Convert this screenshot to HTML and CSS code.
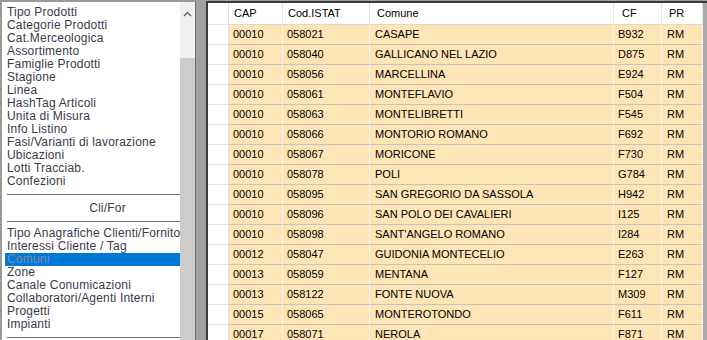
FILE: index.html
```html
<!DOCTYPE html>
<html lang="it">
<head>
    <meta charset="UTF-8">
    <title>Comuni</title>
    <link rel="stylesheet" href="styles.css">
</head>
<body>
    <div class="app">
        <aside class="menu">
            <div class="menu-list">
                <ul class="items">
                    <li>Tipo Prodotti</li>
                    <li>Categorie Prodotti</li>
                    <li>Cat.Merceologica</li>
                    <li>Assortimento</li>
                    <li>Famiglie Prodotti</li>
                    <li>Stagione</li>
                    <li>Linea</li>
                    <li>HashTag Articoli</li>
                    <li>Unita di Misura</li>
                    <li>Info Listino</li>
                    <li>Fasi/Varianti di lavorazione</li>
                    <li>Ubicazioni</li>
                    <li>Lotti Tracciab.</li>
                    <li>Confezioni</li>
                </ul>
                <div class="group-title">Cli/For</div>
                <ul class="items">
                    <li>Tipo Anagrafiche Clienti/Fornitori</li>
                    <li>Interessi Cliente / Tag</li>
                    <li class="selected">Comuni</li>
                    <li>Zone</li>
                    <li>Canale Conumicazioni</li>
                    <li>Collaboratori/Agenti Interni</li>
                    <li>Progetti</li>
                    <li>Impianti</li>
                </ul>
                <div class="group-end"></div>
            </div>
            <div class="vscroll">
                <svg class="arrow" width="9" height="6" viewBox="0 0 9 6">
                    <polyline points="1,5 4.5,1.5 8,5" fill="none" stroke="#606060" stroke-width="1.4"/>
                </svg>
                <div class="thumb"></div>
            </div>
        </aside>

        <section class="grid">
            <table class="data">
                <colgroup>
                    <col class="c-ind">
                    <col class="c-cap">
                    <col class="c-istat">
                    <col class="c-comune">
                    <col class="c-cf">
                    <col class="c-pr">
                </colgroup>
                <thead>
                    <tr>
                        <th class="ind"></th>
                        <th>CAP</th>
                        <th>Cod.ISTAT</th>
                        <th class="h-comune">Comune</th>
                        <th class="h-cf">CF</th>
                        <th class="h-pr">PR</th>
                    </tr>
                </thead>
                <tbody>
                    <tr><td class="ind"></td><td>00010</td><td>058021</td><td class="comune">CASAPE</td><td>B932</td><td class="pr">RM</td></tr>
                    <tr><td class="ind"></td><td>00010</td><td>058040</td><td class="comune">GALLICANO NEL LAZIO</td><td>D875</td><td class="pr">RM</td></tr>
                    <tr><td class="ind"></td><td>00010</td><td>058056</td><td class="comune">MARCELLINA</td><td>E924</td><td class="pr">RM</td></tr>
                    <tr><td class="ind"></td><td>00010</td><td>058061</td><td class="comune">MONTEFLAVIO</td><td>F504</td><td class="pr">RM</td></tr>
                    <tr><td class="ind"></td><td>00010</td><td>058063</td><td class="comune">MONTELIBRETTI</td><td>F545</td><td class="pr">RM</td></tr>
                    <tr><td class="ind"></td><td>00010</td><td>058066</td><td class="comune">MONTORIO ROMANO</td><td>F692</td><td class="pr">RM</td></tr>
                    <tr><td class="ind"></td><td>00010</td><td>058067</td><td class="comune">MORICONE</td><td>F730</td><td class="pr">RM</td></tr>
                    <tr><td class="ind"></td><td>00010</td><td>058078</td><td class="comune">POLI</td><td>G784</td><td class="pr">RM</td></tr>
                    <tr><td class="ind"></td><td>00010</td><td>058095</td><td class="comune">SAN GREGORIO DA SASSOLA</td><td>H942</td><td class="pr">RM</td></tr>
                    <tr><td class="ind"></td><td>00010</td><td>058096</td><td class="comune">SAN POLO DEI CAVALIERI</td><td>I125</td><td class="pr">RM</td></tr>
                    <tr><td class="ind"></td><td>00010</td><td>058098</td><td class="comune">SANT'ANGELO ROMANO</td><td>I284</td><td class="pr">RM</td></tr>
                    <tr><td class="ind"></td><td>00012</td><td>058047</td><td class="comune">GUIDONIA MONTECELIO</td><td>E263</td><td class="pr">RM</td></tr>
                    <tr><td class="ind"></td><td>00013</td><td>058059</td><td class="comune">MENTANA</td><td>F127</td><td class="pr">RM</td></tr>
                    <tr><td class="ind"></td><td>00013</td><td>058122</td><td class="comune">FONTE NUOVA</td><td>M309</td><td class="pr">RM</td></tr>
                    <tr><td class="ind"></td><td>00015</td><td>058065</td><td class="comune">MONTEROTONDO</td><td>F611</td><td class="pr">RM</td></tr>
                    <tr><td class="ind"></td><td>00017</td><td>058071</td><td class="comune">NEROLA</td><td>F871</td><td class="pr">RM</td></tr>
                </tbody>
            </table>
        </section>
    </div>
</body>
</html>
```

FILE: styles.css
```css
html, body {
    margin: 0;
    padding: 0;
    height: 100%;
    overflow: hidden;
}
body {
    background-color: #a0a0a0;
    font-family: 'Liberation Sans', Arial, sans-serif;
}
.app {
    display: flex;
    gap: 10px;
    height: 100%;
}

/* left menu */
.menu {
    display: flex;
    width: 196px;
    flex: none;
    box-sizing: border-box;
    border-top: 2px solid #9a9a9a;
    border-left: 2px solid #9a9a9a;
    border-right: 1px solid #6e6e6e;
    background: #ffffff;
}
.menu-list {
    width: 178px;
    padding: 4px 0 0 3px;
    box-sizing: border-box;
    font-size: 12px;
    letter-spacing: 0.2px;
    color: #3a3a4c;
}
.items {
    list-style: none;
    margin: 0;
    padding: 0;
}
.items li {
    height: 13px;
    line-height: 13px;
    padding-left: 2px;
    white-space: nowrap;
    overflow: hidden;
}
.items li.selected {
    background: #0078d7;
    color: #7d8aa6;
}
.group-title {
    margin: 6px 0 5px 2px;
    border-top: 1px solid #6e6e6e;
    border-bottom: 1px solid #6e6e6e;
    height: 26px;
    line-height: 26px;
    padding-left: 28px;
    text-align: center;
}
.group-end {
    margin: 6px 0 0 2px;
    border-top: 1px solid #6e6e6e;
}
.vscroll {
    position: relative;
    width: 15px;
    background: #f0f0f0;
}
.vscroll .arrow {
    position: absolute;
    left: 3px;
    top: 9px;
}
.vscroll .thumb {
    position: absolute;
    left: 0;
    right: 0;
    top: 56px;
    bottom: 0;
    background: #cdcdcd;
}

/* grid */
.grid {
    flex: 1;
    margin-top: 1px;
    border-top: 2px solid #3a3a3a;
    border-left: 2px solid #3a3a3a;
    background: #ababab;
    overflow: hidden;
}
.data {
    width: 495px;
    table-layout: fixed;
    border-collapse: separate;
    border-spacing: 0;
    font-size: 11px;
    color: #000000;
}
.c-ind { width: 21px; }
.c-cap { width: 54px; }
.c-istat { width: 87px; }
.c-comune { width: 244px; }
.c-cf { width: 48px; }
.c-pr { width: 41px; }
.data th {
    background: #ffffff;
    font-weight: normal;
    text-align: left;
    height: 21px;
    line-height: 21px;
    padding: 0 0 0 5px;
    border-right: 1px solid #e3e3e3;
    border-bottom: 1px solid #d8d8d8;
    white-space: nowrap;
}
.data th.h-comune { padding-left: 7px; }
.data th.h-cf { padding-left: 8px; }
.data th.h-pr { padding-left: 7px; }
.data td {
    background: #ffe4b5;
    line-height: 19px;
    padding: 0 0 0 4px;
    border-right: 1px solid #f4f4f4;
    border-bottom: 1px solid #c4c4c4;
    white-space: nowrap;
    overflow: hidden;
}
.data td.comune,
.data td.pr {
    padding-left: 5px;
}
.data .ind {
    background: #ffffff;
    padding: 0;
    border-right: 1px solid #e0e0e0;
    border-bottom: 1px solid #e3e3e3;
}
```
